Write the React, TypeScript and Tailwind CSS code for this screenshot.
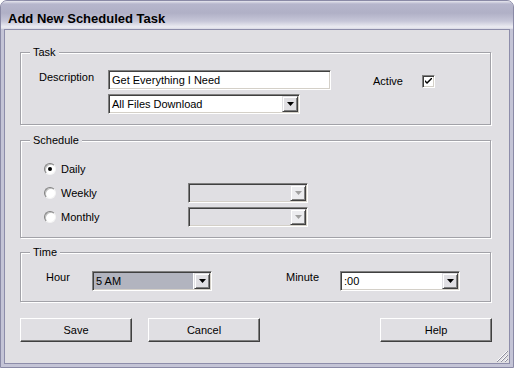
import React from "react";

const sunken =
  "border border-t-[#808080] border-l-[#808080] border-b-white border-r-white shadow-[inset_1px_1px_0_#404040,inset_-1px_-1px_0_#d4d0c8]";
const raised =
  "border border-t-white border-l-white border-b-[#404040] border-r-[#404040] shadow-[inset_-1px_-1px_0_#808080]";

function Arrow({ disabled }: { disabled?: boolean }) {
  return (
    <svg width="7" height="4" viewBox="0 0 7 4">
      <polygon points="0,0 7,0 3.5,4" fill={disabled ? "#a0a0a0" : "#000"} />
    </svg>
  );
}

function ComboButton({ disabled }: { disabled?: boolean }) {
  return (
    <div
      className={`w-[16px] h-full flex items-center justify-center bg-[#e0dfe3] border border-t-[#e0dfe3] border-l-[#e0dfe3] border-b-[#404040] border-r-[#404040] shadow-[inset_1px_1px_0_#fff,inset_-1px_-1px_0_#808080] ${
        disabled ? "bg-[#ececef]" : ""
      }`}
    >
      <Arrow disabled={disabled} />
    </div>
  );
}

function Combo({
  width,
  text,
  disabled,
  selected,
}: {
  width: string;
  text?: string;
  disabled?: boolean;
  selected?: boolean;
}) {
  return (
    <div
      className={`${width} h-[20px] p-[1px] ${sunken} ${disabled ? "bg-[#e0dfe3]" : "bg-white"}`}
    >
      <div className="flex h-full">
        <div
          className={`flex-1 pl-[2px] leading-[16px] text-[11px] text-black mr-[1px] ${
            selected ? "bg-[#b2b4bf]" : ""
          }`}
        >
          {text}
        </div>
        <ComboButton disabled={disabled} />
      </div>
    </div>
  );
}

function Group({
  title,
  height,
  children,
}: {
  title: string;
  height: string;
  children: React.ReactNode;
}) {
  return (
    <div
      className={`relative w-[471px] ${height} border border-[#a2a2a8] shadow-[1px_1px_0_#fff,inset_1px_1px_0_#fff]`}
    >
      <div className="absolute left-[9px] top-[-7px] px-[3px] bg-[#e0dfe3] text-[11px] leading-[13px] text-black">
        {title}
      </div>
      {children}
    </div>
  );
}

function Radio({ checked, label }: { checked?: boolean; label: string }) {
  return (
    <div className="flex items-center gap-[5px]">
      <div className="w-[12px] h-[12px] rounded-full bg-white border border-t-[#808080] border-l-[#808080] border-b-[#f4f4f4] border-r-[#f4f4f4] flex items-center justify-center shadow-[inset_1px_1px_0_#c0c0c0]">
        {checked && <div className="w-[4px] h-[4px] rounded-full bg-black" />}
      </div>
      <span className="text-[11px] leading-[13px] text-black">{label}</span>
    </div>
  );
}

function Button({ label }: { label: string }) {
  return (
    <div
      className={`w-[112px] h-[24px] flex items-center justify-center bg-[#e0dfe3] text-[11px] text-black ${raised}`}
    >
      {label}
    </div>
  );
}

export default function App() {
  return (
    <div className="w-[514px] h-[368px] flex flex-col rounded-t-[7px] overflow-hidden border border-[#8a8aa6] bg-[#c4c4d6] font-['Liberation_Sans',Arial,sans-serif]">
      <div className="h-[28px] shrink-0 pl-[7px] pt-[10px] bg-[linear-gradient(to_bottom,#e6e6ee_0px,#b6b6cc_3px,#b0b0c6_12px,#c6c6d8_20px,#ececf2_26px,#d8d8e4_28px)]">
        <div className="text-[13px] leading-[15px] font-bold text-black">
          Add New Scheduled Task
        </div>
      </div>
      <div className="relative flex-1 mx-[3px] mb-[3px] border border-[#8d8daa] bg-[#e0dfe3] pl-[15px] pt-[22px] flex flex-col">
        <Group title="Task" height="h-[73px]">
          <div className="flex items-start pt-[17px] pl-[18px]">
            <div className="w-[69px] mt-[1px] text-[11px] leading-[13px] text-black">
              Description
            </div>
            <div className="flex flex-col gap-[4px]">
              <div
                className={`w-[223px] h-[20px] bg-white pl-[3px] text-[11px] leading-[18px] text-black ${sunken}`}
              >
                Get Everything I Need
              </div>
              <Combo width="w-[192px]" text="All Files Download" />
            </div>
            <div className="ml-[42px] mt-[5px] flex items-center">
              <div className="w-[49px] text-[11px] leading-[13px] text-black">Active</div>
              <div
                className={`w-[13px] h-[13px] bg-white flex items-center justify-center ${sunken}`}
              >
                <svg width="7" height="7" viewBox="0 0 7 7">
                  <path d="M0 2 L0 4 L2 6 L7 1 L7 -1 L2 4 Z" fill="#000" />
                </svg>
              </div>
            </div>
          </div>
        </Group>

        <div className="h-[15px]" />

        <Group title="Schedule" height="h-[98px]">
          <div className="flex flex-col pt-[16px] pl-[23px]">
            <div className="h-[24px] flex items-center">
              <Radio checked label="Daily" />
            </div>
            <div className="h-[24px] flex items-center">
              <div className="w-[144px]">
                <Radio label="Weekly" />
              </div>
              <Combo width="w-[120px]" disabled />
            </div>
            <div className="h-[24px] flex items-center">
              <div className="w-[144px]">
                <Radio label="Monthly" />
              </div>
              <Combo width="w-[120px]" disabled />
            </div>
          </div>
        </Group>

        <div className="h-[14px]" />

        <Group title="Time" height="h-[50px]">
          <div className="flex items-start pt-[18px] pl-[25px]">
            <div className="w-[46px] text-[11px] leading-[13px] text-black">Hour</div>
            <Combo width="w-[120px]" text="5 AM" selected />
            <div className="w-[74px]" />
            <div className="w-[54px] text-[11px] leading-[13px] text-black">Minute</div>
            <Combo width="w-[120px]" text=":00" />
          </div>
        </Group>

        <div className="flex items-center mt-[16px]">
          <Button label="Save" />
          <div className="w-[16px]" />
          <Button label="Cancel" />
          <div className="w-[120px]" />
          <Button label="Help" />
        </div>

        <svg
          className="absolute right-[1px] bottom-[1px]"
          width="12"
          height="12"
          viewBox="0 0 12 12"
        >
          <g strokeWidth="1">
            <line x1="11" y1="1" x2="1" y2="11" stroke="#fff" />
            <line x1="12" y1="1" x2="1" y2="12" stroke="#8e8e9e" />
            <line x1="11" y1="5" x2="5" y2="11" stroke="#fff" />
            <line x1="12" y1="5" x2="5" y2="12" stroke="#8e8e9e" />
            <line x1="11" y1="9" x2="9" y2="11" stroke="#fff" />
            <line x1="12" y1="9" x2="9" y2="12" stroke="#8e8e9e" />
          </g>
        </svg>
      </div>
    </div>
  );
}
